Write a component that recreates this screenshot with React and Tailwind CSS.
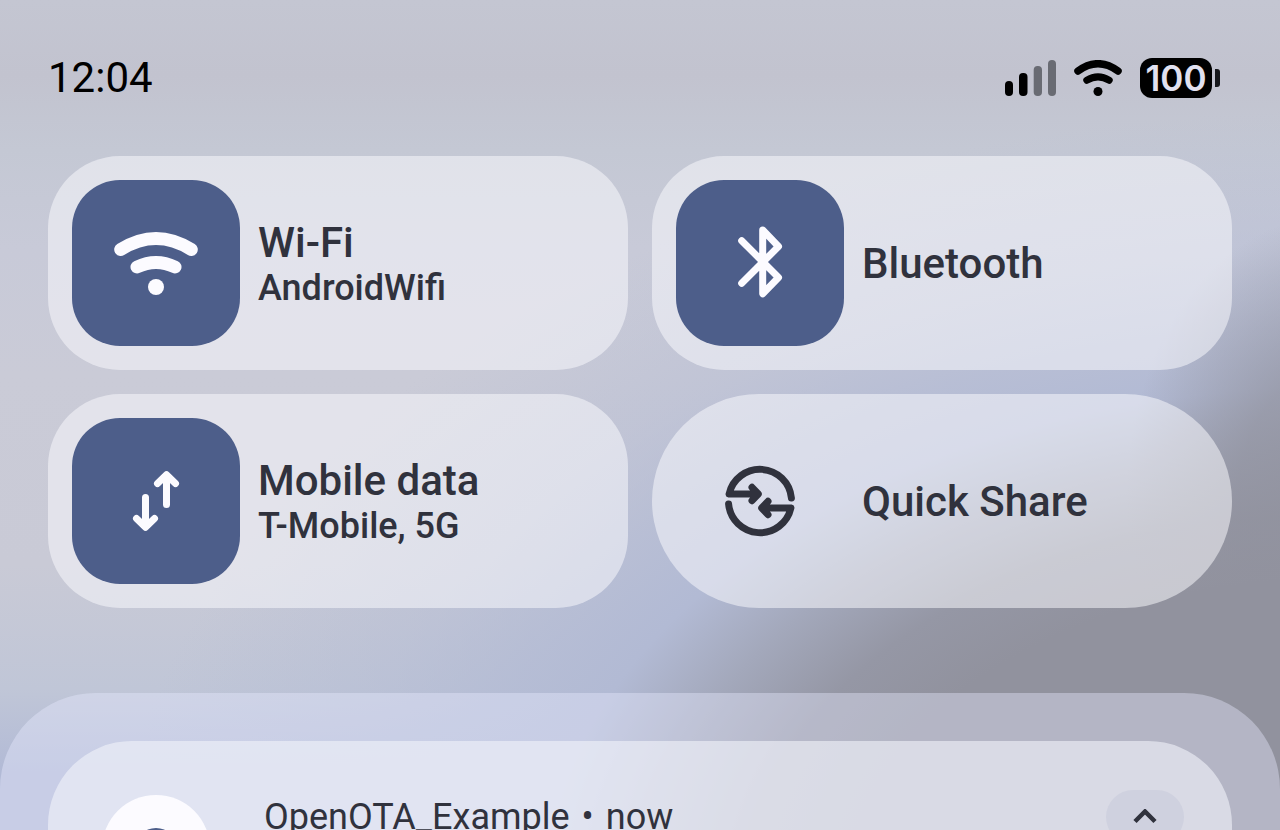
function WifiIcon() {
  return (
    <svg width="84" height="66" viewBox="0 -2 84 66" fill="none" stroke="#fcfbff" strokeWidth="13" strokeLinecap="round" aria-hidden="true">
      <path d="M6.7 17.5Q42 -4.5 77.3 17.5" />
      <path d="M23 35Q42 26 61 35" />
      <circle cx="42" cy="55" r="8" fill="#fcfbff" stroke="none" />
    </svg>
  );
}

function BluetoothIcon() {
  return (
    <svg width="48" height="74" viewBox="0 0 48 74" fill="none" stroke="#fcfbff" strokeWidth="7" strokeLinecap="round" strokeLinejoin="round" aria-hidden="true">
      <path d="M5.7 14.7L42.5 51.5L26.7 67.7V4L42.5 20.5L5.7 57.3" />
    </svg>
  );
}

function DataIcon() {
  return (
    <svg width="48" height="62" viewBox="0 0 48 62" fill="none" stroke="#fcfbff" strokeWidth="7" strokeLinecap="round" strokeLinejoin="round" aria-hidden="true">
      <path d="M34.5 34.5V5.5M25.5 13.5L34.5 4.7L43.5 13.5" />
      <path d="M13.5 27.5V56.5M4.5 48.5L13.5 57.3L22.5 48.5" />
    </svg>
  );
}

function ShareIcon() {
  return (
    <svg width="72" height="72" viewBox="0 0 72 72" fill="none" stroke="#30323d" strokeWidth="7" strokeLinecap="round" strokeLinejoin="round" aria-hidden="true">
      <path d="M67.4 33A31.6 31.6 0 0 0 5.1 29H33.5M28 22.3L34.3 29L28 35.7" />
      <path d="M4.6 39A31.6 31.6 0 0 0 66.9 43H38M44 36.3L37.7 43L44 49.7" />
    </svg>
  );
}

const tiles = [
  { title: "Wi-Fi", detail: "AndroidWifi", Icon: WifiIcon, on: true },
  { title: "Bluetooth", Icon: BluetoothIcon, on: true },
  { title: "Mobile data", detail: "T-Mobile, 5G", Icon: DataIcon, on: true },
  { title: "Quick Share", Icon: ShareIcon, on: false },
];

function Tile({ title, detail, Icon, on }) {
  return (
    <button
      type="button"
      aria-pressed={on}
      className={`flex items-center gap-[18px] bg-[rgba(249,249,254,0.53)] p-6 text-left font-medium text-[#30323d] ${on ? "rounded-[72px]" : "rounded-[107px]"}`}
    >
      <span className={`flex h-[166px] w-[168px] shrink-0 items-center justify-center rounded-[48px] ${on ? "bg-[#4d5e8a]" : ""}`}>
        <Icon />
      </span>
      <span className="flex min-w-0 flex-col pt-[2px]">
        <span className="text-[42px] leading-[48px]">{title}</span>
        {detail && <span className="text-[36px] leading-[42px]">{detail}</span>}
      </span>
    </button>
  );
}

function StatusBar() {
  return (
    <header className="flex h-[156px] shrink-0 items-center justify-between pr-[60px] pl-12 text-black">
      <time className="text-[42px] leading-[48px]">12:04</time>
      <div className="flex items-center gap-[18px]">
        <svg width="51" height="36" viewBox="0 0 51 36" role="img" aria-label="Signal: 2 of 4 bars">
          <rect x="0" y="21" width="8" height="15" rx="4" />
          <rect x="14" y="13" width="8.5" height="23" rx="4" />
          <rect x="28.7" y="6" width="8.3" height="30" rx="4" fill="#696b73" />
          <rect x="43" y="0" width="8" height="36" rx="4" fill="#696b73" />
        </svg>
        <svg width="48" height="36" viewBox="0 0 48 36" fill="none" stroke="#000" strokeWidth="7.5" strokeLinecap="round" role="img" aria-label="Wi-Fi">
          <path d="M4 11Q24 -3.5 44 11" />
          <path d="M12.8 20.3Q24 13.5 35.2 20.3" strokeWidth="7" />
          <circle cx="24" cy="31.5" r="4.5" fill="#000" stroke="none" />
        </svg>
        <div className="flex items-center gap-[3px]">
          <span className="flex h-[40px] w-[72px] items-center justify-center rounded-xl bg-black font-['Inter',sans-serif] text-[35px] leading-[40px] font-semibold text-[#e1e1f0]">100</span>
          <span className="h-[18px] w-[5px] rounded-r-[3px] bg-[#17181c]" />
        </div>
      </div>
    </header>
  );
}

export default function App() {
  return (
    <div className="flex h-screen flex-col overflow-hidden bg-[radial-gradient(16%_34%_at_104%_60%,rgba(145,146,158,0.85)_0%,rgba(145,146,158,0.7)_45%,rgba(150,154,172,0)_100%),radial-gradient(65%_64%_at_105%_108%,#91929e_0%,#91929e_60%,#9597a5_72%,#a3a8bb_84%,#b2bad4_96%,rgba(178,186,212,0.75)_108%,rgba(178,186,212,0.4)_122%,rgba(178,186,212,0)_148%),linear-gradient(180deg,#c4c6d2_0%,#c2c3cf_9%,#c4c8d4_18%,#c8cad8_30%,#cacbd7_45%,#c9cad6_68%,#c0c6d7_83%,#b2bad6_93%,#b2bad6_100%)] font-['Roboto',sans-serif]">
      <StatusBar />
      <main className="flex min-h-0 grow flex-col">
        <section aria-label="Quick settings" className="grid grid-cols-2 gap-6 px-12">
          {tiles.map((tile) => (
            <Tile key={tile.title} {...tile} />
          ))}
        </section>
        <section aria-label="Notifications" className="mt-[85px] grow rounded-t-[96px] bg-[rgba(232,236,255,0.4)] px-12 pt-12">
          <article className="flex h-[300px] items-start rounded-t-[84px] bg-[rgba(242,244,250,0.6)] pt-[49px] pr-12 pl-[54px] text-[#30323d]">
            <span className="mt-[5px] flex size-[108px] shrink-0 items-start justify-center rounded-full bg-[#fcfbff] pt-[33px]">
              <span className="size-[42px] rounded-full bg-[#4d5e8a]" />
            </span>
            <p className="ml-[54px] flex grow gap-3 pt-[6px] text-[36px] leading-[42px]">
              <span>OpenOTA_Example</span>
              <span>•</span>
              <span>now</span>
            </p>
            <button type="button" aria-label="Collapse" className="flex h-[54px] w-[78px] shrink-0 items-center justify-center rounded-full bg-[#cfd1df]">
              <svg width="24" height="16" viewBox="0 0 24 16" fill="none" stroke="#30323d" strokeWidth="4.5" aria-hidden="true">
                <path d="M2 12.5L12 2.5L22 12.5" />
              </svg>
            </button>
          </article>
        </section>
      </main>
    </div>
  );
}
